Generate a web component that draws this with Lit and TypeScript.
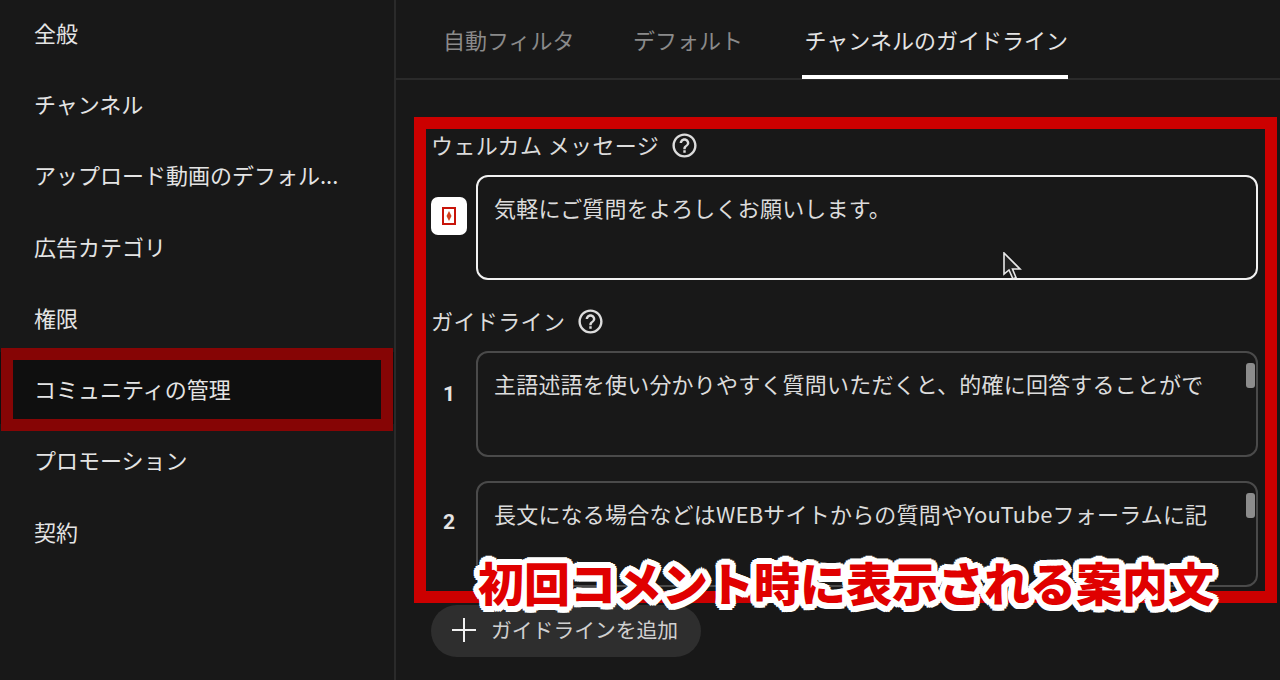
import { css, html, LitElement, svg } from "lit";
import { customElement } from "lit/decorators.js";
import { classMap } from "lit/directives/class-map.js";

const helpIcon = svg`<path d="M11 18h2v-2h-2v2zm1-16C6.48 2 2 6.48 2 12s4.48 10 10 10 10-4.48 10-10S17.52 2 12 2zm0 18c-4.41 0-8-3.59-8-8s3.59-8 8-8 8 3.59 8 8-3.59 8-8 8zm0-14c-2.21 0-4 1.79-4 4h2c0-1.1.9-2 2-2s2 .9 2 2c0 2-3 1.75-3 5h2c0-2.25 3-2.5 3-5 0-2.21-1.79-4-4-4z"/>`;

@customElement("app-root")
export default class AppRoot extends LitElement {
  static styles = css`
    :host {
      display: block;
      position: relative;
      width: 1280px;
      height: 680px;
      overflow: hidden;
      background: #181818;
      color: #e4e4e4;
      font-family: "Noto Sans CJK JP", "Noto Sans", sans-serif;
      font-size: 22px;
    }

    .page {
      display: grid;
      grid-template-columns: 396px 1fr;
      height: 680px;
    }

    .nav {
      border-right: 2px solid #2a2a2a;
    }

    .nav-list {
      margin-top: -4px;
    }

    .nav-item {
      height: 71.3px;
      display: flex;
      align-items: center;
      padding-left: 34px;
      white-space: nowrap;
    }

    .nav-item.active {
      background: #0f0f0f;
    }

    .tabs {
      display: flex;
      gap: 58.5px;
      height: 78px;
      padding-left: 47px;
      border-bottom: 2px solid #2a2a2a;
    }

    .tab {
      height: 79px;
      box-sizing: border-box;
      padding-bottom: 2px;
      display: flex;
      align-items: center;
      color: #8a8a8a;
    }

    .tab.active {
      color: #e4e4e4;
      border-bottom: 4px solid #fff;
      padding: 2px 0 0 3px;
    }

    .content {
      padding: 50px 22px 0 35px;
    }

    .label {
      display: flex;
      align-items: center;
      gap: 11px;
      height: 30px;
      margin-bottom: 15px;
      white-space: pre;
      color: #dcdcdc;
      letter-spacing: 0.4px;
    }

    .label span {
      margin-top: -2px;
    }

    .label svg {
      width: 29px;
      height: 29px;
      fill: #dcdcdc;
    }

    .row {
      display: grid;
      grid-template-columns: 36px 1fr;
      column-gap: 9px;
      align-items: center;
    }

    .num {
      text-align: center;
      font: bold 21px Roboto, sans-serif;
      padding-bottom: 21px;
    }

    .gap-row .num {
      padding-bottom: 24px;
    }

    .field {
      position: relative;
      box-sizing: border-box;
      height: 106px;
      padding: 15px 16px;
      line-height: 30px;
      letter-spacing: 0.2px;
      border: 2px solid #4a4a4a;
      border-radius: 12px;
      white-space: nowrap;
      overflow: hidden;
      color: #dcdcdc;
    }

    .field.focused {
      height: 105px;
      border-color: #f1f1f1;
    }

    .thumb {
      position: absolute;
      top: 10px;
      right: 1px;
      width: 9px;
      height: 25px;
      border-radius: 3px;
      background: #8c8c8c;
    }

    .logo {
      width: 36px;
      height: 38px;
      margin-bottom: 23px;
      border-radius: 7px;
      background: #fff;
      display: flex;
      align-items: center;
      justify-content: center;
    }

    .logo svg {
      width: 14px;
      height: 18px;
    }

    .gap-label {
      margin-top: 26px;
    }

    .gap-row {
      margin-top: 24px;
    }

    .add {
      display: flex;
      align-items: center;
      gap: 14px;
      box-sizing: border-box;
      width: 270px;
      height: 52px;
      margin-top: 18px;
      padding: 0 0 3px 20px;
      border-radius: 26px;
      background: #2e2e2e;
      font-size: 20.8px;
      color: #d0d0d0;
    }

    .add span {
      margin-bottom: 2px;
    }

    .add svg {
      width: 26px;
      height: 26px;
      stroke: #f1f1f1;
      stroke-width: 2;
    }

    .callout {
      position: absolute;
      box-sizing: border-box;
      pointer-events: none;
    }

    .callout.main {
      left: 414px;
      top: 117px;
      width: 863px;
      height: 486px;
      border: 12px solid #cc0000;
    }

    .callout.side {
      left: 1px;
      top: 348px;
      width: 392px;
      height: 83px;
      border: 12px solid #860505;
    }

    .caption {
      position: absolute;
      left: 478px;
      top: 546px;
      line-height: 70px;
      font-size: 46px;
      font-weight: 900;
      white-space: nowrap;
      color: #e00000;
      text-shadow: 6px 0 #fff, -6px 0 #fff, 0 6px #fff, 0 -6px #fff,
        5.5px 2.3px #fff, -5.5px 2.3px #fff, 5.5px -2.3px #fff, -5.5px -2.3px #fff,
        2.3px 5.5px #fff, -2.3px 5.5px #fff, 2.3px -5.5px #fff, -2.3px -5.5px #fff,
        4.2px 4.2px #fff, -4.2px 4.2px #fff, 4.2px -4.2px #fff, -4.2px -4.2px #fff;
    }

    .cursor {
      position: absolute;
      left: 1002px;
      top: 252px;
      width: 20px;
      height: 29px;
    }
  `;

  render() {
    const nav = [
      "全般",
      "チャンネル",
      "アップロード動画のデフォル...",
      "広告カテゴリ",
      "権限",
      "コミュニティの管理",
      "プロモーション",
      "契約",
    ];
    const tabs = ["自動フィルタ", "デフォルト", "チャンネルのガイドライン"];

    return html`
      <div class="page">
        <div class="nav">
          <div class="nav-list">
            ${nav.map(
              (name) => html`
                <div
                  class="nav-item ${classMap({
                    active: name === "コミュニティの管理",
                  })}"
                >
                  ${name}
                </div>
              `
            )}
          </div>
        </div>
        <div>
          <div class="tabs">
            ${tabs.map(
              (name, i) => html`
                <div class="tab ${classMap({ active: i === 2 })}">${name}</div>
              `
            )}
          </div>
          <div class="content">
            ${this.label("ウェルカム メッセージ")}
            <div class="row">
              <div class="logo">
                <svg viewBox="0 0 14 18">
                  <rect
                    x="1"
                    y="1"
                    width="12"
                    height="16"
                    fill="#fff"
                    stroke="#c8140a"
                    stroke-width="2"
                  />
                  <path d="M7 4l2.500 5L7 14 4.500 9z" fill="#d2401e" />
                </svg>
              </div>
              <div class="field focused">気軽にご質問をよろしくお願いします。</div>
            </div>
            <div class="gap-label">${this.label("ガイドライン")}</div>
            ${this.guideline(
              "1",
              "主語述語を使い分かりやすく質問いただくと、的確に回答することがで"
            )}
            <div class="gap-row">
              ${this.guideline(
                "2",
                "長文になる場合などはWEBサイトからの質問やYouTubeフォーラムに記"
              )}
            </div>
            <div class="add">
              <svg viewBox="0 0 26 26"><path d="M13 1v24M1 13h24" /></svg>
              <span>ガイドラインを追加</span>
            </div>
          </div>
        </div>
      </div>

      <div class="callout side"></div>
      <div class="callout main"></div>
      <div class="caption">初回コメント時に表示される案内文</div>

      <svg class="cursor" viewBox="0 0 20 29">
        <path
          d="M2 1v21l5-4 4 9 3-1.500-3.500-8.500H18z"
          fill="#222"
          stroke="#e8e8e8"
          stroke-width="1.600"
        />
      </svg>
    `;
  }

  label(text: string) {
    return html`
      <div class="label">
        <span>${text}</span>
        <svg viewBox="0 0 24 24">${helpIcon}</svg>
      </div>
    `;
  }

  guideline(num: string, text: string) {
    return html`
      <div class="row">
        <div class="num">${num}</div>
        <div class="field">${text}<span class="thumb"></span></div>
      </div>
    `;
  }
}
